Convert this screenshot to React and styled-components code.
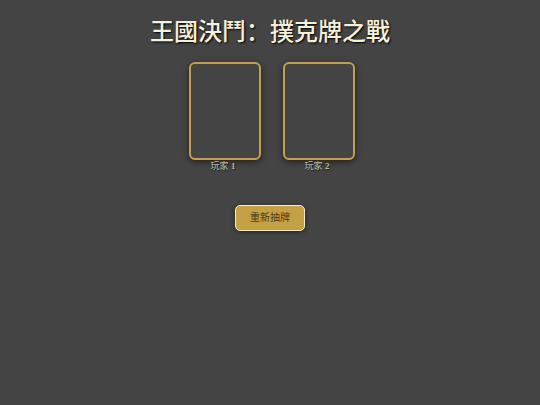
import React from "react";
import styled, { createGlobalStyle } from "styled-components";

const GlobalStyle = createGlobalStyle`
  *, *::before, *::after {
    box-sizing: border-box;
  }

  body {
    margin: 0;
    background: #444444;
    color: #f5f0dc;
    font-family: "Liberation Serif", "Noto Sans CJK SC", serif;
  }
`;

const Page = styled.main`
  display: flex;
  flex-direction: column;
  align-items: center;
  padding: 14px 16px;
`;

const Title = styled.h1`
  margin: 0;
  font-size: 24px;
  font-weight: 500;
  line-height: 36px;
  text-align: center;
  text-shadow: 1px 1px 2px #000000;
`;

const Table = styled.section`
  display: flex;
  justify-content: center;
  gap: 22px;
  padding-left: 4px;
  margin-top: 12px;
`;

const Player = styled.figure`
  display: flex;
  flex-direction: column;
  align-items: center;
  margin: 0;
`;

const Card = styled.div`
  width: 72px;
  height: 98px;
  border: 2px solid #c0a050;
  border-radius: 6px;
  box-shadow: 0 2px 6px rgba(0, 0, 0, 0.5);
`;

const PlayerName = styled.figcaption`
  color: #bfb9a0;
  font-size: 9px;
  line-height: 12px;
  text-shadow: 1px 1px 1px rgba(0, 0, 0, 0.6);
  margin-right: 4px;
`;

const PlayerNumber = styled.span`
  font-weight: 700;
`;

const DrawButton = styled.button`
  margin-top: 33px;
  padding: 4px 14px;
  border: 1px solid #f5ecd0;
  border-radius: 5px;
  background: #c5a145;
  color: #4a3a14;
  font-family: inherit;
  font-size: 10px;
  line-height: 16px;
  box-shadow: 0 1px 4px rgba(0, 0, 0, 0.5);
  cursor: pointer;
`;

const players = [1, 2];

export default function App() {
  return (
    <>
      <GlobalStyle />
      <Page lang="zh-Hans">
        <Title>王國決鬥：撲克牌之戰</Title>
        <Table aria-label="牌桌">
          {players.map((number) => (
            <Player key={number}>
              <Card />
              <PlayerName>
                玩家 <PlayerNumber>{number}</PlayerNumber>
              </PlayerName>
            </Player>
          ))}
        </Table>
        <DrawButton type="button">重新抽牌</DrawButton>
      </Page>
    </>
  );
}
